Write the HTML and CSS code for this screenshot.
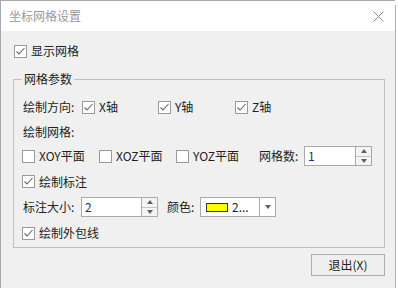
FILE: index.html
```html
<!DOCTYPE html>
<html>
<head>
  <meta charset="utf-8">
  <title>坐标网格设置</title>
  <link rel="stylesheet" href="styles.css">
</head>
<body>
  <div class="window">
    <div class="titlebar">
      <span class="title">坐标网格设置</span>
      <svg class="close" width="11" height="11" viewBox="0 0 11 11"><path d="M0.5 0.5 L10.5 10.5 M10.5 0.5 L0.5 10.5" stroke="#8a8a8a" stroke-width="1" fill="none"/></svg>
    </div>

    <div class="main">
      <label class="check top-check">
        <span class="box checked"><svg width="11" height="11" viewBox="0 0 11 11"><path d="M1.5 5.5 L4 8 L9.5 2" stroke="#666" stroke-width="1.1" fill="none"/></svg></span>
        显示网格
      </label>

      <fieldset class="group">
        <legend>网格参数</legend>

        <div class="row row-dir">
          <span class="lbl">绘制方向:</span>
          <label class="check">
            <span class="box checked"><svg width="11" height="11" viewBox="0 0 11 11"><path d="M1.5 5.5 L4 8 L9.5 2" stroke="#666" stroke-width="1.1" fill="none"/></svg></span>
            X轴
          </label>
          <label class="check">
            <span class="box checked"><svg width="11" height="11" viewBox="0 0 11 11"><path d="M1.5 5.5 L4 8 L9.5 2" stroke="#666" stroke-width="1.1" fill="none"/></svg></span>
            Y轴
          </label>
          <label class="check">
            <span class="box checked"><svg width="11" height="11" viewBox="0 0 11 11"><path d="M1.5 5.5 L4 8 L9.5 2" stroke="#666" stroke-width="1.1" fill="none"/></svg></span>
            Z轴
          </label>
        </div>

        <div class="row row-label">
          <span class="lbl">绘制网格:</span>
        </div>

        <div class="row row-plane">
          <label class="check"><span class="box"></span>XOY平面</label>
          <label class="check"><span class="box"></span>XOZ平面</label>
          <label class="check"><span class="box"></span>YOZ平面</label>
          <span class="lbl">网格数:</span>
          <div class="spin spin-count">
            <span class="spin-value">1</span>
            <span class="spin-btns">
              <span class="arrow up"></span>
              <span class="arrow down"></span>
            </span>
          </div>
        </div>

        <div class="row row-mark">
          <label class="check">
            <span class="box checked"><svg width="11" height="11" viewBox="0 0 11 11"><path d="M1.5 5.5 L4 8 L9.5 2" stroke="#666" stroke-width="1.1" fill="none"/></svg></span>
            绘制标注
          </label>
        </div>

        <div class="row row-size">
          <span class="lbl">标注大小:</span>
          <div class="spin spin-size">
            <span class="spin-value">2</span>
            <span class="spin-btns">
              <span class="arrow up"></span>
              <span class="arrow down"></span>
            </span>
          </div>
          <span class="lbl color-lbl">颜色:</span>
          <div class="combo">
            <span class="swatch"></span>
            <span class="combo-text">2...</span>
            <span class="combo-btn"><span class="arrow down"></span></span>
          </div>
        </div>

        <div class="row">
          <label class="check">
            <span class="box checked"><svg width="11" height="11" viewBox="0 0 11 11"><path d="M1.5 5.5 L4 8 L9.5 2" stroke="#666" stroke-width="1.1" fill="none"/></svg></span>
            绘制外包线
          </label>
        </div>
      </fieldset>

      <div class="footer">
        <button class="btn">退出(X)</button>
      </div>
    </div>
  </div>
</body>
</html>
```

FILE: styles.css
```css
body {
  margin: 0;
  background-color: white;
  font-family: "Noto Sans CJK SC", "Noto Sans", sans-serif;
  font-size: 12px;
  color: #222;
}
.window {
  width: 394px;
  height: 287px;
  border-left: 1px solid #aaa;
  border-top: 1px solid #aaa;
  background-color: #f0f0f0;
  box-shadow: 3px 3px 0 -2px #b0b0b0;
}
.titlebar {
  height: 30px;
  background-color: white;
  display: flex;
  align-items: center;
  justify-content: space-between;
  padding: 0 9px 0 8px;
}
.title {
  color: #9a9a9a;
  line-height: 16px;
}
.close {
  display: block;
  margin-right: 2px;
}
.main {
  padding: 12px 10px 0 12px;
}
.check {
  display: flex;
  align-items: center;
  line-height: 16px;
  white-space: nowrap;
}
.top-check {
  height: 16px;
  margin-left: 1px;
}
.box {
  width: 11px;
  height: 11px;
  border: 1px solid #9a9a9a;
  background-color: white;
  margin-right: 4px;
  flex-shrink: 0;
}
.box svg {
  display: block;
}
.group {
  margin: 12px 0 0 0;
  padding: 0 8px 4px 8px;
  border: 1px solid #c0c0c0;
  min-inline-size: 0;
}
.group legend {
  padding: 0 2px;
  line-height: 16px;
}
.row {
  display: flex;
  align-items: center;
  height: 20px;
  margin-top: 6px;
}
.row-dir {
  margin-top: 10px;
}
.row-label {
  height: 17px;
}
.row-mark {
  height: 19px;
}
.lbl {
  line-height: 16px;
  padding-left: 1px;
  white-space: nowrap;
}
.row-dir .lbl {
  width: 59px;
}
.row-dir .check:nth-child(2) {
  width: 76px;
}
.row-dir .check:nth-child(3) {
  width: 77px;
}
.row-plane .check:nth-child(1),
.row-plane .check:nth-child(2) {
  width: 77px;
}
.row-plane .check:nth-child(3) {
  width: 82px;
}
.row-plane .lbl {
  width: 45px;
}
.row-size .lbl {
  width: 58px;
}
.row-size .color-lbl {
  width: 33px;
  margin-left: 8px;
}
.spin {
  display: flex;
  height: 18px;
  border: 1px solid #ababab;
  background-color: white;
}
.spin-count {
  width: 66px;
}
.spin-size {
  width: 75px;
}
.spin-value {
  flex: 1;
  padding-left: 3px;
  line-height: 18px;
  color: #1c2c6c;
}
.spin-btns {
  width: 15px;
  border-left: 1px solid #ababab;
  display: flex;
  flex-direction: column;
  background-color: #f4f4f4;
}
.spin-btns .arrow {
  flex: 1;
  display: flex;
  align-items: center;
  justify-content: center;
}
.spin-btns .up {
  border-bottom: 1px solid #c4c4c4;
}
.arrow::after {
  content: "";
  width: 0;
  height: 0;
  border-left: 3.5px solid transparent;
  border-right: 3.5px solid transparent;
}
.up::after {
  border-bottom: 4px solid #606060;
}
.down::after {
  border-top: 4px solid #606060;
}
.combo {
  display: flex;
  align-items: center;
  width: 74px;
  height: 18px;
  border: 1px solid #ababab;
  background-color: white;
}
.swatch {
  width: 20px;
  height: 7px;
  border: 1px solid #333;
  background-color: #ffff00;
  margin-left: 5px;
}
.combo-text {
  flex: 1;
  padding-left: 4px;
  line-height: 18px;
}
.combo-btn {
  width: 15px;
  height: 18px;
  border-left: 1px solid #ababab;
  display: flex;
  align-items: center;
  justify-content: center;
}
.combo-btn .arrow {
  display: flex;
}
.footer {
  display: flex;
  justify-content: flex-end;
  margin-top: 6px;
}
.btn {
  width: 74px;
  height: 22px;
  border: 1px solid #adadad;
  background-color: #efefef;
  font-family: "Noto Sans CJK SC", "Noto Sans", sans-serif;
  font-size: 12px;
  color: #222;
  padding: 0;
  line-height: 20px;
}
```
